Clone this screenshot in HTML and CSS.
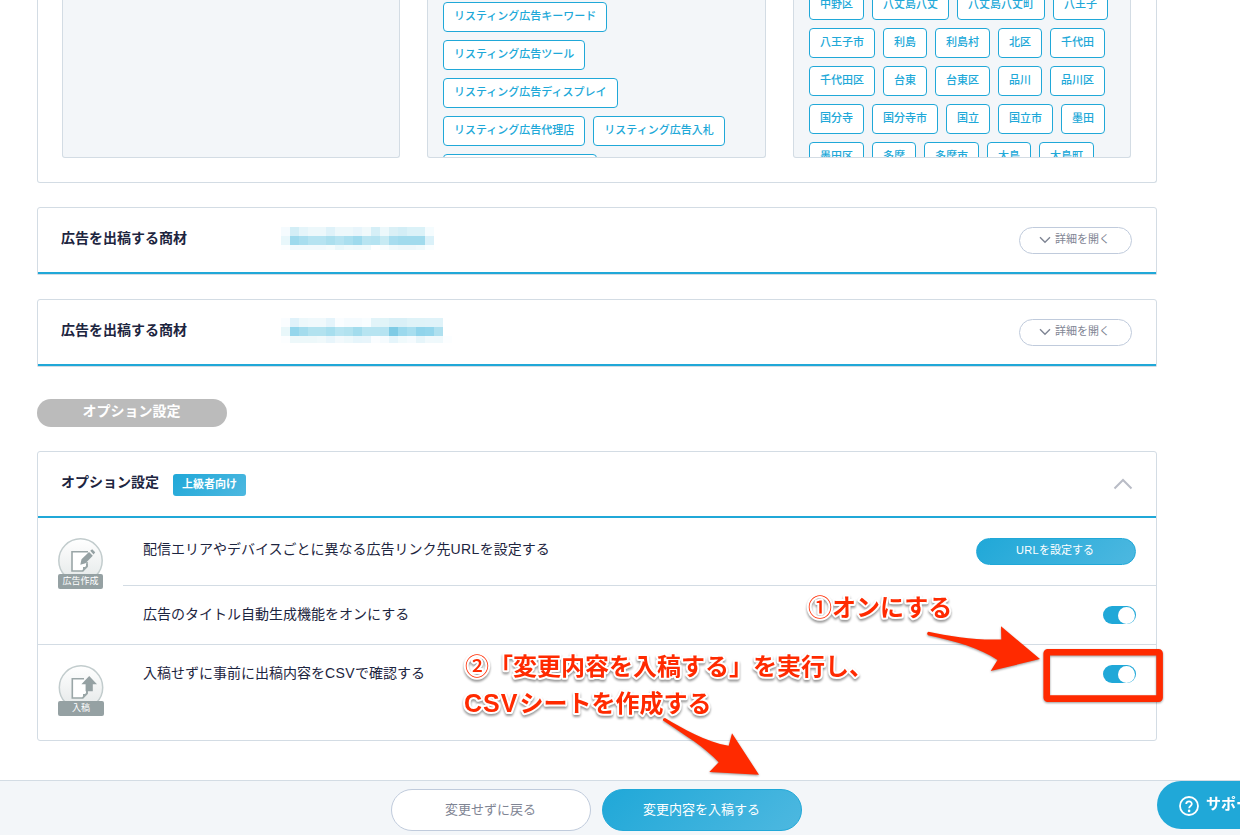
FILE: index.html
```html
<!DOCTYPE html>
<html lang="ja">
<head>
<meta charset="utf-8">
<title>オプション設定</title>
<link rel="stylesheet" href="styles.css">
</head>
<body>
<main class="page">
  <section class="panel keywords">
    <div class="box"></div>
    <div class="box">
      <div class="tags tags-ads">
        <span class="tag">リスティング広告キーワード</span>
        <span class="tag">リスティング広告ツール</span>
        <span class="tag">リスティング広告ディスプレイ</span>
        <span class="tag">リスティング広告代理店</span>
        <span class="tag">リスティング広告入札</span>
        <span class="tag"></span>
      </div>
    </div>
    <div class="box">
      <div class="tags tags-area">
        <span class="tag">中野区</span><span class="tag">八丈島八丈</span><span class="tag">八丈島八丈町</span><span class="tag">八王子</span>
        <span class="tag">八王子市</span><span class="tag">利島</span><span class="tag">利島村</span><span class="tag">北区</span><span class="tag">千代田</span>
        <span class="tag">千代田区</span><span class="tag">台東</span><span class="tag">台東区</span><span class="tag">品川</span><span class="tag">品川区</span>
        <span class="tag">国分寺</span><span class="tag">国分寺市</span><span class="tag">国立</span><span class="tag">国立市</span><span class="tag">墨田</span>
        <span class="tag">墨田区</span><span class="tag">多摩</span><span class="tag">多摩市</span><span class="tag">大島</span><span class="tag">大島町</span>
      </div>
    </div>
  </section>

  <section class="panel product">
    <h2 class="title">広告を出稿する商材</h2>
    <svg class="mosaic" id="mosaic-a" width="171" height="23"></svg>
    <button class="detail"><svg width="12" height="8" viewBox="0 0 12 8"><path d="M1 1.2 6 6.2 11 1.2"/></svg>詳細を開く</button>
  </section>

  <section class="panel product">
    <h2 class="title">広告を出稿する商材</h2>
    <svg class="mosaic mosaic-b" id="mosaic-b" width="171" height="25"></svg>
    <button class="detail"><svg width="12" height="8" viewBox="0 0 12 8"><path d="M1 1.2 6 6.2 11 1.2"/></svg>詳細を開く</button>
  </section>

  <div class="section-pill">オプション設定</div>

  <section class="panel options">
    <header class="options-head">
      <h2 class="title">オプション設定</h2>
      <span class="badge">上級者向け</span>
      <svg class="collapse" width="20" height="12" viewBox="0 0 20 12"><path d="M1.5 10.5 10 2 18.5 10.5"/></svg>
    </header>
    <div class="group">
      <div class="step">
        <svg class="step-icon" width="45" height="45" viewBox="0 0 45 45">
          <defs><linearGradient id="disc" x1="0" y1="0" x2="0" y2="1"><stop offset="0" stop-color="#fff"/><stop offset="1" stop-color="#e4e8e8"/></linearGradient></defs>
          <circle cx="22.5" cy="22.5" r="21.7" fill="url(#disc)" stroke="#c2cccd" stroke-width="1.5"/>
          <path d="M29 24V28L24.5 33H14V13.7H30" fill="#fff" stroke="#9aa6a7" stroke-width="1.6"/>
          <path d="M29.8 26V29L25 33.8V29H28V26Z" fill="#9aa6a7"/>
          <path d="M22.3 26.8 23.5 21.3 31 14 34.8 17.8 27.5 25.3ZM32.2 12.8 34.2 11.2 37.2 14.2 35.6 16.5Z" fill="#95a1a3"/>
        </svg>
        <span class="step-label">広告作成</span>
      </div>
      <div class="rows">
        <div class="row row-url"><span>配信エリアやデバイスごとに異なる広告リンク先<span class="latin">URL</span>を設定する</span><button class="url-btn"><span class="latin">URL</span>を設定する</button></div>
        <div class="row row-title"><span>広告のタイトル自動生成機能をオンにする</span><i class="toggle"></i></div>
      </div>
    </div>
    <div class="group group-submit">
      <div class="step step-upload">
        <svg class="step-icon" width="46" height="45" viewBox="0 0 46 45">
          <circle cx="23" cy="22.5" r="21.7" fill="url(#disc)" stroke="#c2cccd" stroke-width="1.5"/>
          <path d="M29 24V28L24.5 33H14.3V13.7H26" fill="#fff" stroke="#9aa6a7" stroke-width="1.6"/>
          <path d="M29.8 26V29L25 33.8V29H28V26Z" fill="#9aa6a7"/>
          <path d="M31.2 11 39 19.2H34.8V26.2H27.6V19.2H23.4Z" fill="#95a1a3"/>
        </svg>
        <span class="step-label">入稿</span>
      </div>
      <div class="rows">
        <div class="row row-csv"><span>入稿せずに事前に出稿内容を<span class="latin">CSV</span>で確認する</span><i class="toggle"></i></div>
      </div>
    </div>
  </section>
</main>

<footer class="actions">
  <button class="action back">変更せずに戻る</button>
  <button class="action submit">変更内容を入稿する</button>
</footer>

<div class="support">
  <svg width="20" height="20" viewBox="0 0 20 20"><circle cx="10" cy="10" r="9"/><path d="M7.2 8.1C7.3 4.5 12.9 4.6 12.8 8C12.7 10 10.1 9.9 10.1 12.2"/><circle class="dot" cx="10.1" cy="14.9" r="1.3"/></svg>
  <span>サポート</span>
</div>

<svg class="notes" width="1240" height="835" viewBox="0 0 1240 835">
  <g class="note-text">
    <text x="808" y="616"><tspan class="num">①</tspan>オンにする</text>
    <text x="465" y="674.5"><tspan class="num">②</tspan>「変更内容を入稿する」を実行し、</text>
    <text x="464" y="712"><tspan class="note-latin">CSV</tspan><tspan x="519.5">シートを作成する</tspan></text>
  </g>
  <g class="note-shape">
    <path d="M928.5 631.7C950 636.5 978 640.5 1001.3 639.4L1001 626.3 1040 659 990.7 671 997.5 660C980 648 955 641 928 635.2Q926 633 928.5 631.7Z"/>
    <path d="M665 718C682 728 706 742 728.7 745.8L732 733.2 759 774.8 709.3 772 718.7 762.3C706 748 683 734 663 720.5Q662.5 718 665 718Z"/>
    <rect class="frame" x="1046.7" y="652.2" width="112.9" height="46.4" rx="1"/>
  </g>
</svg>
<script src="mosaic.js"></script>
</body>
</html>
```
FILE: styles.css
```css
* { box-sizing: border-box; }
body {
  margin: 0;
  width: 1240px;
  height: 835px;
  overflow: hidden;
  display: flex;
  flex-direction: column;
  background: #fff;
  color: #1d2540;
  font-family: "Liberation Sans", "Noto Sans CJK JP", sans-serif;
}
button { font-family: inherit; padding: 0; }
.page {
  height: 780px;
  flex: none;
  padding-left: 37px;
  width: 1157px;
}
.panel {
  border: 1px solid #d3dce4;
  border-radius: 3px;
  background: #fff;
  margin-bottom: 24px;
}
.keywords {
  height: 183px;
  border-top: 0;
  border-radius: 0 0 3px 3px;
  padding: 0 24px;
  display: grid;
  grid-template-columns: 338px 339px 338px;
  column-gap: 27px;
}
.box {
  height: 158px;
  overflow: hidden;
  padding: 0 15px;
  background: #f3f6f9;
  border: 1px solid #d3dce4;
  border-top: 0;
  border-radius: 0 0 3px 3px;
}
.tags { display: flex; flex-wrap: wrap; gap: 8px; }
.tags-ads { margin-top: 2px; }
.tags-area { margin-top: -10px; }
.tag {
  height: 30px;
  padding: 0 10px;
  border: 1px solid #20a8d8;
  border-radius: 4px;
  background: #fff;
  color: #20a8d8;
  font-size: 11px;
  font-weight: 500;
  line-height: 27px;
  white-space: nowrap;
}
.tags-ads .tag:nth-child(6) { width: 154px; }

.product {
  height: 68px;
  display: flex;
  align-items: flex-start;
  padding: 0 24px 0 23px;
  border-radius: 3px 3px 1px 1px;
  box-shadow: inset 0 -2px #20a8d8;
}
.title {
  margin: 0;
  font-size: 14px;
  font-weight: 700;
  line-height: 20px;
}
.product .title { width: 220px; margin-top: 20px; }
.mosaic { margin-top: 19px; }
.mosaic-b { margin-top: 18px; }
.detail {
  margin: 19px 0 0 auto;
  width: 113px;
  height: 27px;
  display: flex;
  justify-content: center;
  gap: 4px;
  padding-right: 2px;
  border: 1px solid #c0cbdc;
  border-radius: 14px;
  background: #fff;
  color: #7f8594;
  font-size: 11px;
  line-height: 23px;
}
.detail svg {
  margin-top: 8px;
  fill: none;
  stroke: #7f8594;
  stroke-width: 1.4;
}
.section-pill {
  width: 190px;
  height: 28px;
  margin: 32px 0 24px;
  padding-right: 1px;
  border-radius: 14px;
  background: #bbb;
  color: #fff;
  text-align: center;
  font-size: 14px;
  font-weight: 700;
  line-height: 25px;
}
.options { height: 290px; margin: 0; }
.options-head {
  height: 66px;
  display: flex;
  align-items: flex-start;
  padding: 0 23px;
  border-bottom: 2px solid #20a8d8;
}
.options-head .title { margin-top: 20px; }
.badge {
  width: 73px;
  height: 22px;
  margin: 22px auto 0 14px;
  border-radius: 3px;
  background: linear-gradient(135deg, #20a8d8, #4db8e0);
  color: #fff;
  text-align: center;
  font-size: 11px;
  font-weight: 700;
  line-height: 20px;
}
.collapse {
  margin-top: 26px;
  fill: none;
  stroke: #b9bcc6;
  stroke-width: 2;
}
.group { display: flex; height: 127px; border-bottom: 1px solid #d3dce4; }
.group-submit { height: 95px; border: 0; }
.step {
  width: 85px;
  padding: 20px 0 0 20px;
  display: flex;
  flex-direction: column;
}
.step-icon { display: block; }
.step-label {
  z-index: 1;
  width: 45px;
  height: 15px;
  margin-top: -9px;
  border-radius: 2px;
  background: #95a1a3;
  color: #fff;
  text-align: center;
  font-size: 9px;
  line-height: 15px;
}
.step-upload .step-label { width: 46px; }
.rows { flex: 1; }
.row {
  display: flex;
  justify-content: space-between;
  padding: 0 20px;
  font-size: 14px;
  line-height: 22px;
}
.row-url { height: 68px; padding-top: 20px; border-bottom: 1px solid #d3dce4; }
.row-title { padding-top: 17px; }
.row-csv { padding: 17px 20px 0 20px; }
.row > span { white-space: nowrap; }
.latin { letter-spacing: .4px; }
.url-btn {
  width: 160px;
  height: 27px;
  border: 1px solid #20a8d8;
  border-radius: 14px;
  background: linear-gradient(135deg, #20a8d8, #4db8e0);
  color: #fff;
  font-size: 11px;
  line-height: 22px;
  padding: 0 2px 3px 0;
}
.toggle {
  width: 33px;
  height: 18px;
  margin-top: 3px;
  padding: 0 1px 0 15px;
  display: flex;
  align-items: center;
  border-radius: 9px;
  background: #20a8d8;
}
.toggle::before {
  content: "";
  width: 17px;
  height: 17px;
  border-radius: 50%;
  background: #fff;
}
.actions {
  height: 55px;
  flex: none;
  padding: 8px 0 0 391px;
  display: flex;
  gap: 11px;
  border-top: 1px solid #d3dce4;
  background: #f3f6f9;
}
.action {
  width: 200px;
  height: 42px;
  border: 1px solid #c0cbdc;
  border-radius: 21px;
  padding: 0 1px 4px 0;
  background: #fff;
  color: #7f8594;
  font-size: 13px;
}
.submit {
  border-color: #20a8d8;
  background: linear-gradient(135deg, #20a8d8, #4db8e0);
  color: #fff;
}
.support {
  position: fixed;
  left: 1157px;
  top: 781px;
  width: 120px;
  height: 48px;
  padding: 15px 0 0 22px;
  display: flex;
  gap: 7px;
  border-radius: 24px;
  background: #20a8d8;
  color: #fff;
  font-size: 15px;
  font-weight: 700;
  line-height: 16px;
  white-space: nowrap;
}
.support svg { flex: none; fill: none; stroke: #fff; stroke-width: 1.8; }
.support .dot { fill: #fff; stroke: none; }
.notes { position: absolute; left: 0; top: 0; pointer-events: none; }
.note-text {
  font-size: 24px;
  font-weight: 700;
  fill: #ff2a00;
  stroke: #fff;
  stroke-width: 4px;
  stroke-linejoin: round;
  paint-order: stroke;
  filter: drop-shadow(0 2px 1px rgba(0, 0, 0, .4));
}
.num { font-weight: 500; }
.note-latin { font-size: 25px; letter-spacing: 1px; }
.note-shape { fill: #ff2a00; filter: drop-shadow(0 1px 1px rgba(0, 0, 0, .4)); }
.frame { fill: none; stroke: #ff2a00; stroke-width: 6.6; }
```
FILE: mosaic.js
```js
// Pixelated masks over the product names: one colour per 9px column.
const masks = {
  "mosaic-a": {
    heights: [9, 9, 5],
    rows: [
      "f5fbfe d3eef6 e5f5fa edf8fb edf8fb dff2f9 edf8fb edf8fb e8f5fb f0f9fb d5eff7 ecf8fb daf0f6 d3eef6 dbf2f8 dbf2f8 f5fcfe",
      "e8f7fb 9edaed a9deef b5e3f1 b5e3f1 abdfee b5e3f1 aadfef 9edaed b8e4f1 b5e3f1 c6eaf3 a7ddef a1dbed a1dbed a1dbed daf1f9",
      "fcfeff f2fafd f2fafd f2fafd f2fafd f5fcfd eaf8fb f0fafc eef9fc f0fafc ffffff f8fdfe f0fafc edf8fb edf8fb f0fafc fafeff"
    ]
  },
  "mosaic-b": {
    heights: [9, 9, 7],
    rows: [
      "fafdff e0f2fa edf8fb f0f9fc f0f9fc e5f4fb fafdff f5fbfe f5fbfe f8fdff e2f4f9 e0f4f8 d9f0f7 d9f0f7 dff3f8 dff3f8 e0f3f9 e0f3f9",
      "e8f7fa 94d6ec a4dced b2e2ef b2e2ef a7deee b7e4f1 b2e2ef a3dced b7e4f1 b7e4f1 b5e3f1 7ecbe5 9bd9ed a7deef 90d4eb 94d6ec afe0ef",
      "fcfeff edf8fa edf8fa edf8fa f0f9fb e8f5fb f2f9fc edf8fb e6f5fb e8f5fb fafdff f5fbfe e5f5fb f0fafc f5fbfe e6f5fa f0f9fc eff9fc fcfeff"
    ]
  }
};
for (const [id, mask] of Object.entries(masks)) {
  const svg = document.getElementById(id);
  let y = 0;
  mask.rows.forEach((row, r) => {
    row.split(" ").forEach((color, i) => {
      const cell = document.createElementNS("http://www.w3.org/2000/svg", "rect");
      cell.setAttribute("x", i * 9);
      cell.setAttribute("y", y);
      cell.setAttribute("width", 9);
      cell.setAttribute("height", mask.heights[r]);
      cell.setAttribute("fill", "#" + color);
      svg.appendChild(cell);
    });
    y += mask.heights[r];
  });
}
```
